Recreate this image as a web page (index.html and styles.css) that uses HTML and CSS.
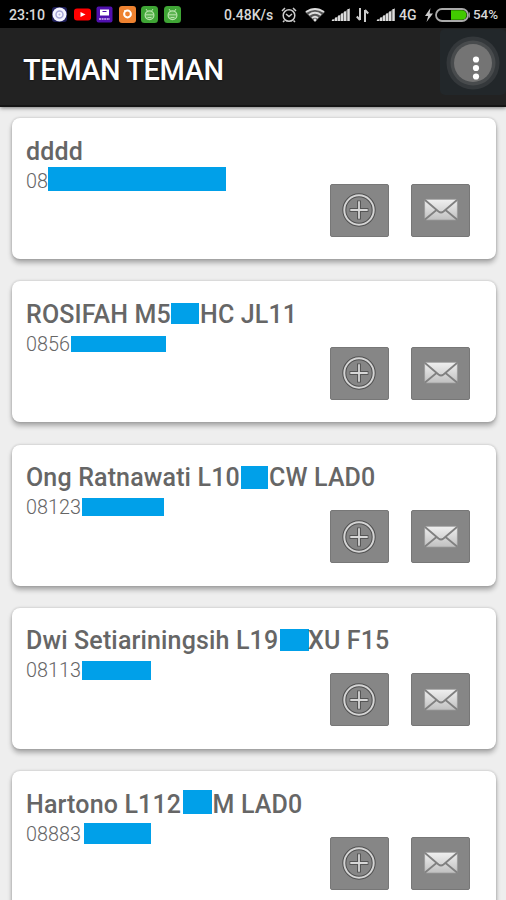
FILE: index.html
```html
<!DOCTYPE html>
<html lang="id">
<head>
<meta charset="utf-8">
<title>TEMAN TEMAN</title>
<link rel="stylesheet" href="styles.css">
</head>
<body>
<svg class="defs" width="0" height="0">
  <defs>
    <linearGradient id="paper" x1="0" y1="0" x2="0" y2="1"><stop offset="0" stop-color="#f0f0f0"/><stop offset="1" stop-color="#c0c0c0"/></linearGradient>
    <symbol id="plus" viewBox="0 0 36 36">
      <circle cx="18" cy="18" r="14.7" fill="none" stroke="#505050" stroke-width="4"/>
      <circle cx="18" cy="18" r="14.7" fill="none" stroke="#d4d4d4" stroke-width="2"/>
      <path d="M18 8.6v18.8M8.6 18h18.8" stroke="#555" stroke-width="4"/>
      <path d="M18 9.3v17.4M9.3 18h17.4" stroke="#d8d8d8" stroke-width="1.8"/>
    </symbol>
    <symbol id="mail" viewBox="0 0 36 24">
      <rect x="1.6" y="1.3" width="32.8" height="20.8" rx="2" fill="url(#paper)" stroke="#999" stroke-width=".8"/>
      <path d="M2 2l13.5 11.5q2.5 2 5 0L34 2M2 21.5l11.5-9.5M34 21.5l-11.5-9.5" fill="none" stroke="#808080" stroke-width="1.8"/>
    </symbol>
    <symbol id="signal" viewBox="0 0 19 13">
      <path d="M0 13L19 0v13z" fill="#777"/>
      <path d="M2 13v-1.5M5 13V9.5M8 13V7.5M11 13V5.5M14 13V3.5M17.5 13V1" stroke="#ddd" stroke-width="2"/>
    </symbol>
    <symbol id="android" viewBox="0 0 17 17">
      <rect width="17" height="17" rx="3.5" fill="#3fa535"/>
      <path d="M5 3l2 3M12 3l-2 3" stroke="#b9e4ac" stroke-width="1"/>
      <circle cx="8.5" cy="9.3" r="4.4" fill="#5eb553" stroke="#b9e4ac" stroke-width="1.2"/>
      <path d="M4.5 8.8h8M6.5 11.5h4" stroke="#b9e4ac" stroke-width="1"/>
    </symbol>
  </defs>
</svg>

<header class="status">
  <span class="clock">23:10</span>
  <div class="notices">
    <svg width="17" height="17" viewBox="0 0 17 17"><rect x="1" y="1" width="15" height="15" rx="3" fill="#20205c"/><circle cx="8.5" cy="8.5" r="7" fill="#f4f4ff"/><circle cx="8.5" cy="8.5" r="3.5" fill="none" stroke="#a6a6d8" stroke-width="1.5"/><circle cx="8.5" cy="8.5" r="1" fill="#b8b8dd"/></svg>
    <svg width="17" height="17" viewBox="0 0 17 17"><rect y="2.5" width="17" height="12" rx="3" fill="#f00"/><path d="M6.5 6l5 2.5-5 2.5z" fill="#fff"/></svg>
    <svg width="17" height="17" viewBox="0 0 17 17"><rect x=".5" y=".5" width="16" height="16" rx="2" fill="#5010ae"/><rect x="4" y="3.5" width="9" height="6" fill="#fff"/><path d="M6.5 5.5h4" stroke="#5010ae"/><path d="M3 13h11" stroke="#b48de5" stroke-width="2" stroke-dasharray="2 .6"/></svg>
    <svg width="17" height="17" viewBox="0 0 17 17"><rect width="17" height="17" rx="3" fill="#ee8230"/><circle cx="8.5" cy="8" r="3.4" fill="none" stroke="#fff" stroke-width="2"/><path d="M5 5h2" stroke="#fff" stroke-width="1.5"/></svg>
    <svg width="17" height="17"><use href="#android"/></svg>
    <svg width="17" height="17"><use href="#android"/></svg>
  </div>
  <div class="system">
    <span class="speed">0.48K/s</span>
    <svg class="alarm" width="16" height="16" viewBox="0 0 16 16" fill="none" stroke="#ccc" stroke-width="1.5"><circle cx="8" cy="8.5" r="5.8"/><path d="M1 4l3-3M15 4l-3-3M5 7l3 2.5L11 7M3.5 13.5L2 15M12.5 13.5L14 15"/></svg>
    <svg class="wifi" width="20" height="15" viewBox="0 0 20 15"><path d="M0 5Q10-3 20 5L10 15z" fill="#555"/><path d="M1 5q9-6 18 0M4 8q6-4.5 12 0M7 11q3-2.5 6 0" fill="none" stroke="#ddd" stroke-width="1.9"/><circle cx="10" cy="13" r="1.4" fill="#ddd"/></svg>
    <svg class="signal-one" width="19" height="13"><use href="#signal"/></svg>
    <svg class="data" width="13" height="14" viewBox="0 0 13 14"><path d="M4 0v12M0.8 8.5L4 12M9 14V2M9 2l3.2 3.5" fill="none" stroke="#ccc" stroke-width="2"/></svg>
    <svg class="signal-two" width="19" height="13"><use href="#signal"/></svg>
    <span class="network">4G</span>
    <svg class="bolt" width="8" height="14" viewBox="0 0 8 14"><path d="M5.5 0L0 8h3.2L1.5 14 8 5.5H4.6z" fill="#ccc"/></svg>
    <svg class="battery" width="35" height="14" viewBox="0 0 35 14"><rect x="1" y="1" width="32" height="12" rx="6" fill="#000" stroke="#aaa" stroke-width="1.8"/><path d="M16 2.3h11a4.7 4.7 0 0 1 0 9.4H16z" fill="#42c900"/><path d="M34.3 4.5v5" stroke="#aaa"/></svg>
    <span class="percent">54%</span>
  </div>
</header>

<div class="appbar">
  <h1>TEMAN TEMAN</h1>
  <div class="menu">
    <svg width="66" height="66" viewBox="0 0 66 66"><circle cx="33" cy="34" r="26.5" fill="#34383b"/><circle cx="33" cy="34" r="22.5" fill="#484b4d"/><circle cx="33" cy="34" r="19" fill="#747474"/><g fill="#fff"><circle cx="36" cy="30.5" r="3.1"/><circle cx="36" cy="39" r="3.1"/><circle cx="36" cy="47.5" r="3.1"/></g></svg>
  </div>
</div>

<main class="list">
  <article class="card c1">
    <div class="name"><span>dddd</span></div>
    <div class="phone"><span class="lead">08</span><i class="mask"></i></div>
    <div class="actions"><button><svg width="36" height="36"><use href="#plus"/></svg></button><button><svg width="36" height="24"><use href="#mail"/></svg></button></div>
  </article>
  <article class="card c2">
    <div class="name"><span class="lead">ROSIFAH M5</span><i class="mask"></i><span class="tail">HC JL11</span></div>
    <div class="phone"><span class="lead">0856</span><i class="mask"></i></div>
    <div class="actions"><button><svg width="36" height="36"><use href="#plus"/></svg></button><button><svg width="36" height="24"><use href="#mail"/></svg></button></div>
  </article>
  <article class="card c3">
    <div class="name"><span class="lead">Ong Ratnawati L10</span><i class="mask"></i><span class="tail">CW LAD0</span></div>
    <div class="phone"><span class="lead">08123</span><i class="mask"></i></div>
    <div class="actions"><button><svg width="36" height="36"><use href="#plus"/></svg></button><button><svg width="36" height="24"><use href="#mail"/></svg></button></div>
  </article>
  <article class="card c4">
    <div class="name"><span class="lead">Dwi Setiariningsih L19</span><i class="mask"></i><span class="tail">XU F15</span></div>
    <div class="phone"><span class="lead">08113</span><i class="mask"></i></div>
    <div class="actions"><button><svg width="36" height="36"><use href="#plus"/></svg></button><button><svg width="36" height="24"><use href="#mail"/></svg></button></div>
  </article>
  <article class="card c5">
    <div class="name"><span class="lead">Hartono L112</span><i class="mask"></i><span class="tail">M LAD0</span></div>
    <div class="phone"><span class="lead">08883</span><i class="mask"></i></div>
    <div class="actions"><button><svg width="36" height="36"><use href="#plus"/></svg></button><button><svg width="36" height="24"><use href="#mail"/></svg></button></div>
  </article>
</main>
</body>
</html>
```
FILE: styles.css
```css
* { box-sizing: border-box; }
body {
  margin: 0;
  height: 900px;
  overflow: hidden;
  display: flex;
  flex-direction: column;
  background: #eee;
  font-family: Roboto, "Liberation Sans", sans-serif;
}
.defs { position: absolute; }
svg { display: block; flex: none; }

.status {
  flex: none;
  height: 28px;
  padding: 1px 8px 0 9px;
  display: flex;
  align-items: center;
  background: #000;
  color: #d8d8d8;
  font-size: 14px;
  font-weight: 500;
  white-space: nowrap;
}
.clock { width: 42px; font-size: 14.2px; }
.notices { display: flex; gap: 5.6px; }
.system { margin-left: auto; display: flex; align-items: center; }
.speed { width: 50px; }
.alarm { margin-left: 7px; }
.wifi { margin-left: 8px; }
.signal-one { margin-left: 6px; }
.data { margin-left: 6px; }
.signal-two { margin-left: 7px; }
.network { margin-left: 4px; width: 18px; }
.bolt { margin-left: 8px; }
.battery { margin-left: 2px; }
.percent { margin-left: 3px; width: 25px; font-size: 13.4px; }

.appbar {
  flex: none;
  height: 79px;
  padding-left: 23px;
  display: flex;
  justify-content: space-between;
  background: #222;
  border-bottom: 2px solid #151515;
  box-shadow: 0 1px 4px rgba(0, 0, 0, .5);
}
.appbar h1 {
  margin: 0;
  padding-top: 22px;
  color: #fff;
  font-size: 29px;
  font-weight: 500;
  line-height: 40px;
  letter-spacing: -.45px;
  white-space: nowrap;
  text-shadow: 0 0 2px #000;
}
.menu {
  width: 66px;
  height: 66px;
  margin-top: 1px;
  border-radius: 5px;
  background: #22272a;
}

.list {
  padding: 11px 10.5px 0 11.5px;
  display: flex;
  flex-direction: column;
  gap: 22.3px;
}
.card {
  flex: none;
  height: 141px;
  padding: 18.5px 25.5px 0 14.5px;
  border-radius: 8px;
  background: #fff;
  box-shadow: 0 4px 5px rgba(0, 0, 0, .28), 0 0 3px rgba(0, 0, 0, .22);
  color: #666;
}
.name, .phone {
  display: flex;
  align-items: flex-start;
  white-space: nowrap;
}
.name { height: 32px; font-size: 25px; font-weight: 500; line-height: 30px; letter-spacing: .15px; }
.phone { height: 15px; font-size: 19.8px; font-weight: 300; line-height: 26px; }
.lead, .mask { flex: none; }
.mask { background: #00a0e9; }
.tail { margin-left: 1px; }

.c1 .phone .lead { width: 22px; }
.c1 .phone .mask { width: 178px; height: 24px; margin-top: -1.5px; }

.c2 .name .lead { width: 145px; }
.c2 .name .mask { width: 28px; height: 21px; margin-top: 3px; }
.c2 .phone .lead { width: 44.5px; }
.c2 .phone .mask { width: 95px; height: 16px; margin-top: 4px; }

.c3 .name .lead { width: 214.5px; }
.c3 .name .mask { width: 27.5px; height: 23px; margin-top: 2.5px; }
.c3 .phone .lead { width: 56px; }
.c3 .phone .mask { width: 82px; height: 18px; margin-top: 2.5px; }

.c4 .name .lead { width: 254px; }
.c4 .name .mask { width: 29px; height: 22px; margin-top: 2.5px; }
.c4 .name .tail { margin-left: -1px; }
.c4 .phone .lead { width: 56px; }
.c4 .phone .mask { width: 69px; height: 19px; margin-top: 2.5px; }

.c5 .name .lead { width: 157px; }
.c5 .name .mask { width: 28.5px; height: 24px; margin-top: .5px; }
.c5 .phone .lead { width: 57.5px; }
.c5 .phone .mask { width: 67.5px; height: 21px; margin-top: 1.5px; }

.actions {
  display: flex;
  justify-content: flex-end;
  gap: 22.5px;
}
.actions button {
  width: 59px;
  height: 53px;
  padding: 0;
  display: flex;
  align-items: center;
  justify-content: center;
  border: 1px solid #777;
  border-radius: 2px;
  background: #868686;
}
```
